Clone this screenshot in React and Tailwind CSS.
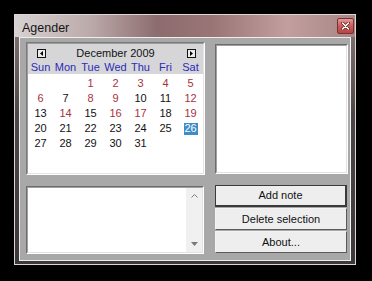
import React from "react";

const RED = new Set([1, 2, 3, 4, 5, 6, 8, 9, 12, 14, 16, 17, 19]);

function buildRows() {
  const cells = [null, null];
  for (let d = 1; d <= 31; d++) cells.push(d);
  while (cells.length < 42) cells.push(null);
  const rows = [];
  for (let i = 0; i < 6; i++) rows.push(cells.slice(i * 7, i * 7 + 7));
  return rows;
}

function NavBtn({ dir }) {
  return (
    <div className="w-[9px] h-[9px] border border-[#111] bg-[#ececec] flex items-center justify-center">
      <svg width="5" height="5" viewBox="0 0 5 5">
        {dir === "left" ? (
          <polygon points="4,0 4,5 1,2.5" fill="#000" />
        ) : (
          <polygon points="1,0 1,5 4,2.5" fill="#000" />
        )}
      </svg>
    </div>
  );
}

function Calendar() {
  const rows = buildRows();
  const names = ["Sun", "Mon", "Tue", "Wed", "Thu", "Fri", "Sat"];
  return (
    <div className="w-[179px] h-[133px] border-t border-l border-[#7a7a7a] border-r-white border-b-white border-r border-b">
      <div className="w-full h-full border border-t-[#9c9c9c] border-l-[#9c9c9c] border-r-[#e4e4e4] border-b-[#e4e4e4] flex flex-col bg-white">
        <div className="h-[30px] bg-[#d6d6d8] pt-[2px] pb-[1px] flex flex-col">
          <div className="h-[15px] flex items-center justify-between pl-[9px] pr-[7px] relative">
            <NavBtn dir="left" />
            <span className="absolute inset-0 flex items-center justify-center text-[11px] leading-none text-[#111]">
              December 2009
            </span>
            <NavBtn dir="right" />
          </div>
          <div className="h-[12px] grid grid-cols-7">
            {names.map((n) => (
              <div
                key={n}
                className="flex items-center justify-center text-[11px] leading-none text-[#2b2bb8]"
              >
                {n}
              </div>
            ))}
          </div>
        </div>
        <div className="flex-1 pt-[2px] flex flex-col">
          {rows.map((r, i) => (
            <div key={i} className="h-[15px] grid grid-cols-7">
              {r.map((d, j) => (
                <div key={j} className="flex items-center justify-center">
                  {d === 26 ? (
                    <span className="w-[14px] h-[12px] bg-[#3d8dc9] text-white text-[11px] leading-none flex items-center justify-center">
                      26
                    </span>
                  ) : d ? (
                    <span
                      className={
                        "text-[11px] leading-none " +
                        (RED.has(d) ? "text-[#a8323e]" : "text-[#111]")
                      }
                    >
                      {d}
                    </span>
                  ) : null}
                </div>
              ))}
            </div>
          ))}
        </div>
      </div>
    </div>
  );
}

function Sunken({ className, children }) {
  return (
    <div
      className={
        "border border-t-[#6c6c6c] border-l-[#6c6c6c] border-r-white border-b-white " +
        className
      }
    >
      <div className="w-full h-full border border-t-[#a0a0a0] border-l-[#a0a0a0] border-r-[#e2e2e2] border-b-[#e2e2e2] bg-white flex">
        {children}
      </div>
    </div>
  );
}

function Btn({ children, def }) {
  return (
    <div
      className={
        "h-[22px] bg-[#eeeeee] flex items-center justify-center text-[11px] text-[#111] " +
        (def
          ? "border border-[#3a3a3a] border-r-2 border-b-2"
          : "border border-t-[#f4f4f4] border-l-[#f4f4f4] border-r-[#5a5a5a] border-b-[#5a5a5a]")
      }
    >
      {children}
    </div>
  );
}

export default function App() {
  return (
    <div className="w-[372px] h-[281px] bg-black pt-[14px] pl-[14px] font-['Liberation_Sans',Arial,sans-serif]">
      <div className="w-[342px] h-[251px] border border-[#dcd6d6] bg-[linear-gradient(180deg,#8a7878_0%,#4e4646_40%,#3c3838_100%)] flex flex-col">
        <div className="h-[22px] -mx-0 bg-[linear-gradient(90deg,#d8d2d2_0%,#bcaaaa_22%,#8c6c6e_42%,#9a7576_58%,#c29e9e_80%,#a88686_100%)] flex items-start justify-between pl-[7px] pr-[1px]">
          <span className="text-[12.5px] leading-none text-[#151515] mt-[7px]">Agender</span>
          <div className="mt-[3px] w-[17px] h-[16px] rounded-[2px] border border-[#7a3030] bg-[linear-gradient(180deg,#e49a9a_0%,#c85c5c_50%,#b84646_100%)] flex items-center justify-center">
            <svg width="9" height="8" viewBox="0 0 9 8">
              <path d="M1.5 1 L7.5 7 M7.5 1 L1.5 7" stroke="#5a1a1a" strokeWidth="3" strokeLinecap="round" />
              <path d="M1.5 1 L7.5 7 M7.5 1 L1.5 7" stroke="#fff" strokeWidth="1.6" strokeLinecap="round" />
            </svg>
          </div>
        </div>
        <div className="px-[4px] pb-[3px]">
          <div className="w-[332px] h-[224px] border border-[#eeeeee] border-r-[#f6f6f6] bg-[#a8a8a8] pl-[6px] pt-[4px] flex flex-col">
            <div className="flex">
              <Calendar />
              <Sunken className="ml-[10px] mt-[2px] w-[133px] h-[130px]" />
            </div>
            <div className="flex mt-[10px]">
              <Sunken className="mt-[1px] w-[178px] h-[68px]">
                <div className="flex-1" />
                <div className="w-[16px] h-full bg-[#f0f0f0] flex flex-col items-center justify-between pt-[6px] pb-[6px]">
                  <svg width="7" height="4" viewBox="0 0 7 4">
                    <path d="M0.5 3.5 L3.5 0.5 L6.5 3.5" stroke="#7a7a7a" strokeWidth="1" fill="none" />
                  </svg>
                  <svg width="7" height="4" viewBox="0 0 7 4">
                    <polygon points="0,0 7,0 3.5,4" fill="#7a7a7a" />
                  </svg>
                </div>
              </Sunken>
              <div className="ml-[11px] w-[132px] flex flex-col gap-[1px]">
                <Btn def>Add note</Btn>
                <Btn>Delete selection</Btn>
                <Btn>About...</Btn>
              </div>
            </div>
          </div>
        </div>
      </div>
    </div>
  );
}
